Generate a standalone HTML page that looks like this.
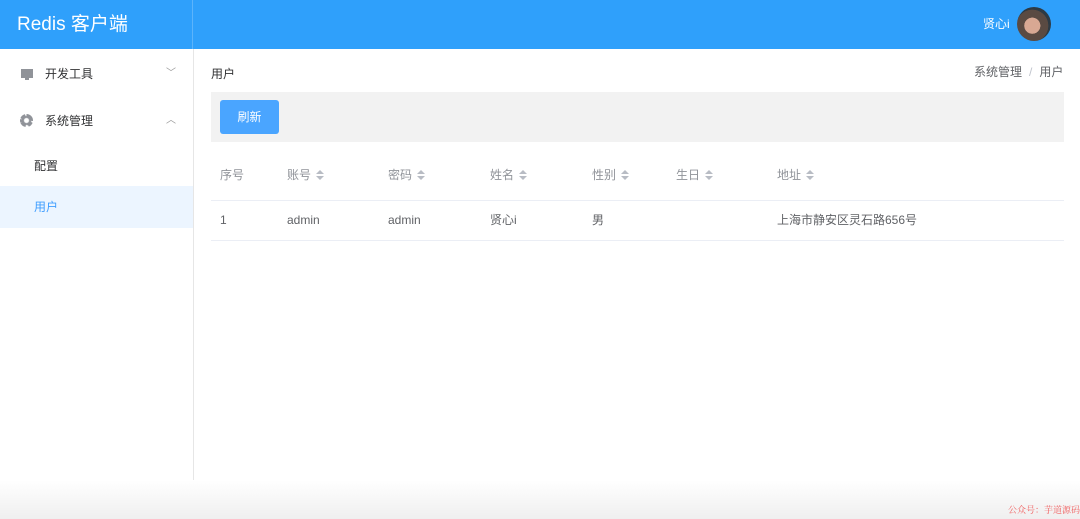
<!DOCTYPE html>
<html><head><meta charset="utf-8"><style>
*{margin:0;padding:0;box-sizing:border-box}
body{width:1080px;height:519px;overflow:hidden;background:#fff;font-family:"Liberation Sans","Noto Sans CJK SC",sans-serif;position:relative}
.hdr{position:absolute;left:0;top:0;width:1080px;height:49px;background:#2fa0fb}
.logo{position:absolute;left:0;top:0;width:193px;height:49px;border-right:1px solid #5cb4fb;color:#fff;font-size:19px;line-height:49px;padding-left:17px}
.user{position:absolute;left:983px;top:16px;color:#fff;font-size:12px;line-height:16px}
.av{position:absolute;left:1017px;top:7px;width:34px;height:34px;border-radius:50%;background:radial-gradient(circle at 45% 55%,#d8a893 0 30%,#5a4a42 31% 60%,#2d3a44 61%)}
.side{position:absolute;left:0;top:49px;width:194px;height:470px;border-right:1px solid #e6e6e6}
.mi{position:absolute;left:0;width:193px;font-size:12px;color:#303133;line-height:16px}
.t{position:absolute;font-size:12px;line-height:16px;white-space:nowrap}
.sort{display:inline-block;width:8px;height:10px;vertical-align:-1px;margin-left:5px;position:relative}
.sort:before{content:"";position:absolute;left:0;top:0;border:4px solid transparent;border-bottom-color:#b8bcc4;border-top:0}
.sort:after{content:"";position:absolute;left:0;top:6px;border:4px solid transparent;border-top-color:#b8bcc4;border-bottom:0}
.h{color:#909399;top:167px}
.d{color:#606266;top:212px}
.foot{position:absolute;left:0;top:480px;width:1080px;height:39px;background:linear-gradient(#fff,#efefef)}
</style></head><body>
<div class="hdr"><div class="logo">Redis 客户端</div><div class="user">贤心i</div><div class="av"></div></div>
<div class="side">
<div class="mi" style="top:17px"><span style="position:absolute;left:21px;top:3px;width:12px;height:9px;background:#909399"></span><span style="position:absolute;left:25px;top:12px;width:4px;height:2px;background:#909399"></span><span style="position:absolute;left:45px">开发工具</span><span style="position:absolute;left:166px;color:#999;font-size:10px">﹀</span></div>
<div class="mi" style="top:64px"><span style="position:absolute;left:20px;top:1px;width:13px;height:13px;border-radius:50%;border:3px dotted #909399;background:radial-gradient(#fff 0 2px,#909399 3px)"></span><span style="position:absolute;left:45px">系统管理</span><span style="position:absolute;left:166px;color:#999;font-size:10px">︿</span></div>
<div class="mi" style="top:109px;left:34px">配置</div>
<div class="mi" style="top:137px;height:42px;background:#ecf5ff;color:#409eff"><span style="position:absolute;left:34px;top:13px">用户</span></div>
</div>
<div class="t" style="left:211px;top:66px;color:#303133">用户</div>
<div class="t" style="left:974px;top:64px;color:#606266">系统管理<span style="color:#c0c4cc;margin:0 7px">/</span>用户</div>
<div style="position:absolute;left:211px;top:92px;width:853px;height:50px;background:#f2f2f2"></div>
<div style="position:absolute;left:220px;top:100px;width:59px;height:34px;background:#4aa5ff;border-radius:3px;color:#fff;font-size:12px;text-align:center;line-height:34px">刷新</div>
<div class="t h" style="left:220px">序号</div>
<div class="t h" style="left:287px">账号<i class="sort"></i></div>
<div class="t h" style="left:388px">密码<i class="sort"></i></div>
<div class="t h" style="left:490px">姓名<i class="sort"></i></div>
<div class="t h" style="left:592px">性别<i class="sort"></i></div>
<div class="t h" style="left:676px">生日<i class="sort"></i></div>
<div class="t h" style="left:777px">地址<i class="sort"></i></div>
<div style="position:absolute;left:211px;top:200px;width:853px;height:1px;background:#ebeef5"></div>
<div class="t d" style="left:220px">1</div>
<div class="t d" style="left:287px">admin</div>
<div class="t d" style="left:388px">admin</div>
<div class="t d" style="left:490px">贤心i</div>
<div class="t d" style="left:592px">男</div>
<div class="t d" style="left:777px">上海市静安区灵石路656号</div>
<div style="position:absolute;left:211px;top:240px;width:853px;height:1px;background:#ebeef5"></div>
<div class="foot"></div>
<div style="position:absolute;left:1000px;top:490px;width:1px;height:29px;"></div>
<div style="position:absolute;left:1008px;top:504px;font-size:9px;line-height:12px;color:#f06060;font-family:'Noto Serif CJK SC',serif">公众号：芋道源码</div>
</body></html>
